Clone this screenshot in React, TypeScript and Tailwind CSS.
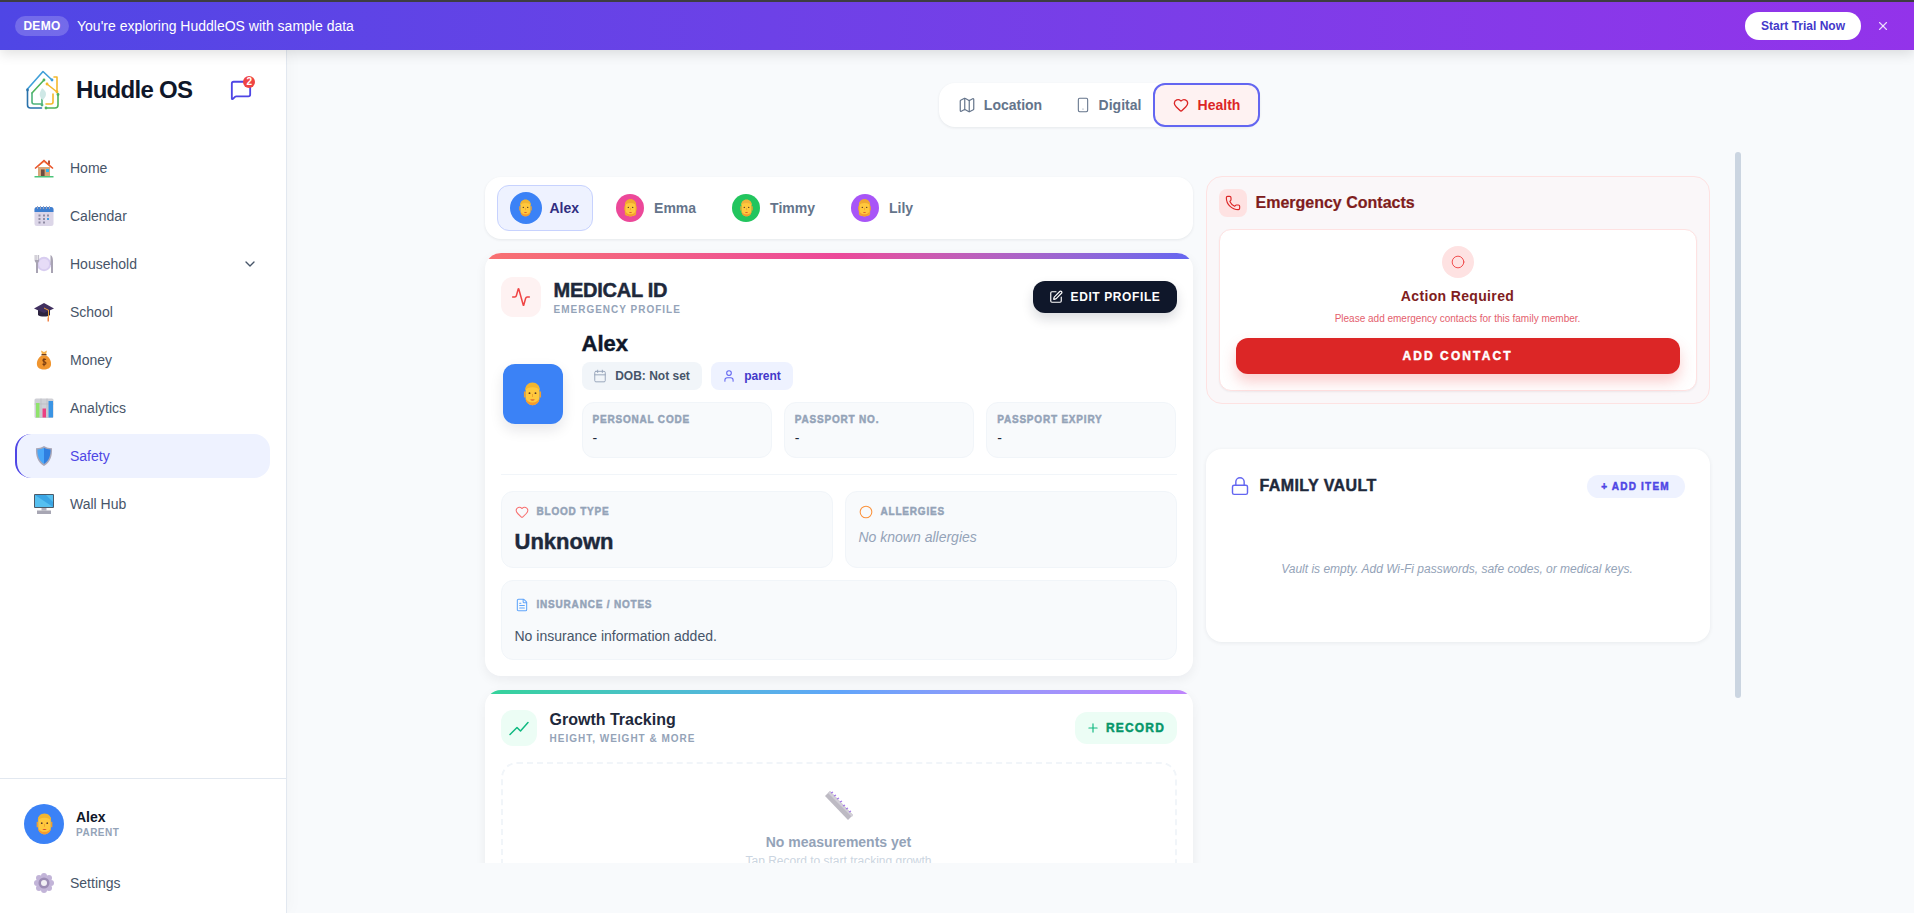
import {
  Activity,
  Calendar,
  ChevronDown,
  Circle,
  FileText,
  Heart,
  Lock,
  Map as MapIcon,
  MessageSquare,
  Phone,
  Plus,
  Smartphone,
  SquarePen,
  User,
  X,
} from "lucide-react";
import type { ReactNode } from "react";

// the original falls on a heavier black face, a thin stroke gets close
const heavy = "font-bold [-webkit-text-stroke:0.45px_currentColor]";

function HomeEmoji() {
  return (
    <svg viewBox="0 0 20 20" className="h-5 w-5">
      <path d="M4 9h12v9H4z" fill="#d9a679" />
      <path d="M7 11.5h3.6V18H7z" fill="#6d4c41" />
      <path d="M12 11h3v3h-3z" fill="#29b6f6" />
      <path d="M14 2.5h2v4h-2z" fill="#b5533c" />
      <path d="M10 1.5 19.5 10l-1 1L10 4 1.5 11l-1-1z" fill="#e8532b" />
      <path d="M10 3.5 3 9.5V9l7-6 7 6v.5z" fill="#f4793a" />
      <path d="M.5 18h19v1.5H.5z" fill="#4cc47a" />
    </svg>
  );
}

function CalendarEmoji() {
  return (
    <svg viewBox="0 0 20 20" className="h-5 w-5">
      <rect x="0.5" y="1" width="19" height="19" rx="2.5" fill="#dcd6e8" />
      <path d="M.5 3.5A2.5 2.5 0 0 1 3 1h14a2.5 2.5 0 0 1 2.5 2.5V6H.5z" fill="#3f7fd0" />
      <path d="M3 0h1v3H3zM6 0h1v3H6zM9 0h1v3H9zM12 0h1v3h-1zM15 0h1v3h-1z" fill="#9aa5c4" />
      <path d="M4.5 8.5h2v2h-2zM9 8.5h2v2H9zM13 8.5h2v2h-2zM4.5 12h2v2h-2zM9 12h2v2H9zM4.5 15.5h2v2h-2zM9 15.5h2v2H9z" fill="#8f8ba3" />
      <path d="M13 12h2v2h-2z" fill="#3ea0e6" />
    </svg>
  );
}

function PlateEmoji() {
  return (
    <svg viewBox="0 0 20 20" className="h-5 w-5">
      <circle cx="10" cy="10" r="7.2" fill="#d8cdf0" />
      <circle cx="10" cy="10" r="5.2" fill="#e6dcf7" />
      <path d="M.7 1h.8v5h1V1h.8v5h1V1h.8v6L4 9v10H2V9L.7 7z" fill="#a8a3b3" />
      <path d="M16.5 1c1.5.5 2.5 2.5 2.5 6v12h-2v-8h-.5z" fill="#a8a3b3" />
    </svg>
  );
}

function CapEmoji() {
  return (
    <svg viewBox="0 0 20 20" className="h-5 w-5">
      <path d="M4 8h12v5c-2 2-10 2-12 0z" fill="#2d2440" />
      <path d="M10 1 20 6.5 10 11 0 6.5z" fill="#41305f" />
      <path d="M10 5.5 15 8v9h-1V8.5L10 6.5z" fill="#f3a638" />
      <path d="M13.5 15.5H15v4h-1.5z" fill="#f2854a" />
    </svg>
  );
}

function MoneyEmoji() {
  return (
    <svg viewBox="0 0 20 20" className="h-5 w-5">
      <path d="M7 .5 10 2l3-1.5-1 4H8z" fill="#f5b14c" />
      <path d="M7.5 4h5v1.5h-5z" fill="#6b3d1e" />
      <path d="M8 5.5h4c4 2 5.500 6 5 9.500-.4 3-3.500 4.500-7 4.500s-6.600-1.500-7-4.500C2.500 11.500 4 7.500 8 5.500" fill="#f0952f" />
      <path d="M12 9.500c-2-1-3.500 0-3 1.200s3 .8 3 2.400-2 1.800-3.500 1M10 8.200v8" fill="none" stroke="#7a3d12" strokeWidth="1.1" />
    </svg>
  );
}

function ChartEmoji() {
  return (
    <svg viewBox="0 0 20 20" className="h-5 w-5">
      <rect x="0.5" y="0.5" width="19" height="19.5" rx="1.5" fill="#cfd0d6" />
      <path d="M.5 6h19M7 .5V20M13 .5V20" stroke="#b9bac2" strokeWidth=".7" />
      <path d="M2 5h3.5v14.500H2z" fill="#8fe36b" />
      <path d="M8.5 10.500H12v9H8.500z" fill="#ec3f82" />
      <path d="M14.5 3H19v16.500h-4.500z" fill="#3a94e4" />
    </svg>
  );
}

function ShieldEmoji() {
  return (
    <svg viewBox="0 0 20 20" className="h-5 w-5">
      <path d="M10 0c2.500 1.600 5 2.200 8 2.300.4 7.500-1.500 14-8 17.700C3.500 16.300 1.600 9.800 2 2.300 5 2.200 7.500 1.600 10 0" fill="#a9a7b8" />
      <path d="M10 1.700V18C5 15 3.300 9.500 3.400 3.500 6 3.300 8 2.800 10 1.700" fill="#4aa8f8" />
      <path d="M10 1.700c2 1.100 4 1.600 6.600 1.800.1 6-1.600 11.500-6.600 14.500z" fill="#2f7fe0" />
    </svg>
  );
}

function MonitorEmoji() {
  return (
    <svg viewBox="0 0 20 20" className="h-5 w-5">
      <rect x="0" y="0" width="20" height="14" rx="1" fill="#4c5a68" />
      <path d="M1 1h18v12H1z" fill="#56c0f0" />
      <path d="M1 1h11l7 7v5z" fill="#3aa5e4" />
      <path d="M7.5 14h5v2.500h-5z" fill="#b2b1bd" />
      <path d="M3 16.500h14V20H3z" fill="#a7a6b3" />
    </svg>
  );
}

function GearEmoji() {
  return (
    <svg viewBox="0 0 20 20" className="h-5 w-5">
      <g fill="#c2b4d8">
        <circle cx="10" cy="3" r="3" />
        <circle cx="10" cy="17" r="3" />
        <circle cx="3" cy="10" r="3" />
        <circle cx="17" cy="10" r="3" />
        <circle cx="5" cy="5" r="3" />
        <circle cx="15" cy="5" r="3" />
        <circle cx="5" cy="15" r="3" />
        <circle cx="15" cy="15" r="3" />
      </g>
      <circle cx="10" cy="10" r="5.5" fill="#9c8cb5" />
      <circle cx="10" cy="10" r="3" fill="#f2f0f5" />
    </svg>
  );
}

function RulerEmoji() {
  return (
    <svg viewBox="0 0 32 32" className="h-8 w-8">
      <path d="M2 7 7 2 30 26 25 31z" fill="#bdbac3" />
      <path d="M7 2 30 26l-1 2L5 4z" fill="#d2cfd7" />
      <path d="m8 4 2-1M11 7l2-1M14 10l2-1M17 13l2-1M20 17l2-1M23 20l2-1M26 23l2-1" stroke="#a274e8" strokeWidth="1.3" />
    </svg>
  );
}

function TrendLine() {
  return (
    <svg viewBox="0 0 20 20" className="h-5 w-5" fill="none" stroke="#10b981" strokeWidth="1.5" strokeLinecap="round" strokeLinejoin="round">
      <path d="M1 16.500 8 9.500l3.500 3.500L19 4.500" />
    </svg>
  );
}

function Face({ className, hair = "#f2b530", skin = "#ffc83d", long = false }: { className: string; hair?: string; skin?: string; long?: boolean }) {
  return (
    <svg viewBox="0 0 24 28" className={className}>
      {long && <path d="M3 9c0-6 4-9 9-9s9 3 9 9v14c0 3-4 4-9 4s-9-1-9-4z" fill={hair} />}
      <path d="M2 11h2v7H2zM20 11h2v7h-2z" fill="#f0a02f" />
      <path d="M4 8c0-4 3-6 8-6s8 2 8 6v11c0 5-4 8-8 8s-8-3-8-8z" fill={skin} />
      <path d="M4 19c0 5 4 8 8 8s8-3 8-8c-1 3-4 5-8 5s-7-2-8-5" fill="#f59a2e" />
      <path d="M3.5 10c0-6 3.500-9.500 8.500-9.500S20.500 4 20.500 10c-2-3-4-4-8.500-4s-6.500 1-8.500 4" fill={hair} />
      <circle cx="8.5" cy="13" r="1.1" fill="#5b3a2a" />
      <circle cx="15.5" cy="13" r="1.1" fill="#5b3a2a" />
      <path d="M9.5 20.500h5c-.5 1.500-4.500 1.500-5 0" fill="#d1402f" />
      <path d="M12 14v3.500" stroke="#eb9b2e" strokeWidth="1" />
    </svg>
  );
}

function LogoMark() {
  return (
    <svg viewBox="0 0 34 40" className="h-10 w-[34px]" fill="none" strokeLinecap="round" strokeLinejoin="round">
      <path d="M1.5 19 17 1.500 26 10" stroke="#3f9fd8" strokeWidth="1.6" />
      <path d="M1.5 21v14c0 2 1 3 3 3h11" stroke="#2a72ab" strokeWidth="1.6" />
      <path d="M6 23 18 10" stroke="#4fb35a" strokeWidth="1.6" />
      <path d="M6 23v9c0 1.500 1 2 2 2h8v-5" stroke="#4fb37a" strokeWidth="1.6" />
      <path d="M21 14l10 8M31 22V7h-3" stroke="#f4b82c" strokeWidth="1.6" />
      <path d="M27 24v8c0 1.500-1 2-2 2h-5" stroke="#f4b82c" strokeWidth="1.6" />
      <path d="M32 25v10c0 2-1 3-3 3h-9" stroke="#4fb35a" strokeWidth="1.6" />
      <path d="M16 18c-1 3-3 5-2 8s2 3 3 4c1-2 3-3 3-6s-2-4-4-6" fill="#cfe8e6" />
      <circle cx="1.5" cy="20" r="1.4" fill="#2a72ab" />
      <circle cx="18" cy="10" r="1.4" fill="#4fb35a" />
      <circle cx="26" cy="10" r="1.4" fill="#3f9fd8" />
      <circle cx="21" cy="14" r="1.4" fill="#f4b82c" />
      <circle cx="31" cy="22" r="1.4" fill="#f4b82c" />
      <circle cx="32" cy="24.5" r="1.4" fill="#4fb35a" />
      <circle cx="20" cy="38" r="1.4" fill="#4fb35a" />
      <circle cx="16" cy="35" r="1.4" fill="#4fb37a" />
    </svg>
  );
}

const navItems: { label: string; icon: ReactNode; active?: boolean; chevron?: boolean }[] = [
  { label: "Home", icon: <HomeEmoji /> },
  { label: "Calendar", icon: <CalendarEmoji /> },
  { label: "Household", icon: <PlateEmoji />, chevron: true },
  { label: "School", icon: <CapEmoji /> },
  { label: "Money", icon: <MoneyEmoji /> },
  { label: "Analytics", icon: <ChartEmoji /> },
  { label: "Safety", icon: <ShieldEmoji />, active: true },
  { label: "Wall Hub", icon: <MonitorEmoji /> },
];

function NavRow({ label, icon, active, chevron }: { label: string; icon: ReactNode; active?: boolean; chevron?: boolean }) {
  return (
    <div
      className={`flex h-11 items-center gap-4 rounded-2xl pr-3 text-sm ${
        active ? "border-l-2 border-[#4f46e5] bg-[#eef2ff] pl-[17px] text-[#4f46e5]" : "pl-[19px] text-[#475569]"
      }`}
    >
      {icon}
      <span className="flex-1">{label}</span>
      {chevron && <ChevronDown size={16} className="text-[#475569]" />}
    </div>
  );
}

function Sidebar() {
  return (
    <aside className="relative flex w-[287px] shrink-0 flex-col border-r border-[#e2e8f0] bg-white shadow-[4px_0_14px_rgba(15,23,42,0.025)]">
      <div className="flex h-[96px] items-start pt-[20px] pl-[26px]">
        <LogoMark />
        <span className="mt-1 ml-4 text-2xl leading-8 font-bold tracking-[-0.7px] text-[#0f172a]">Huddle OS</span>
        <div className="relative mt-[9px] ml-[38px] text-[#4f46e5]">
          <MessageSquare size={22} strokeWidth={2} />
          <span className="absolute -top-[3px] -right-[3px] flex h-3 w-3 items-center justify-center rounded-full bg-[#ef4444] text-[10px] leading-none font-bold text-white">
            2
          </span>
        </div>
      </div>
      <nav className="flex flex-1 flex-col gap-1 pr-4 pl-[15px]">
        {navItems.map((item) => (
          <NavRow key={item.label} {...item} />
        ))}
      </nav>
      <div className="border-t border-[#e2e8f0] pt-[25px] pr-4 pb-2 pl-[15px]">
        <div className="flex items-center gap-3 pl-[9px]">
          <div className="flex h-10 w-10 items-center justify-center rounded-full bg-[#3b82f6]">
            <Face className="h-[22px] w-[19px]" />
          </div>
          <div>
            <div className="text-sm leading-[18px] font-bold text-[#0f172a]">Alex</div>
            <div className="text-[10px] leading-[14px] font-bold tracking-[0.5px] text-[#94a3b8]">PARENT</div>
          </div>
        </div>
        <div className="mt-[17px]">
          <NavRow label="Settings" icon={<GearEmoji />} />
        </div>
      </div>
    </aside>
  );
}

function DemoBanner() {
  return (
    <div className="relative z-10 border-t-2 border-[#3d3d42] shadow-[0_4px_12px_rgba(0,0,0,0.12)]">
      <div className="flex h-12 items-center bg-gradient-to-r from-[#4f46e5] to-[#9333ea] pr-[24px] pl-[15px] text-white">
        <span className="flex h-5 w-[54px] items-center justify-center rounded-full bg-white/20 text-xs font-bold tracking-[0.3px]">DEMO</span>
        <span className="ml-2 flex-1 text-sm">You're exploring HuddleOS with sample data</span>
        <button className="h-7 w-[116px] rounded-full bg-white text-xs font-bold text-[#4338ca]">Start Trial Now</button>
        <X size={14} className="ml-[15px] text-white/80" />
      </div>
    </div>
  );
}

function ModeTabs() {
  return (
    <div className="mx-auto flex h-11 -translate-x-px items-center rounded-2xl bg-white pl-[2px] text-sm font-bold text-[#64748b] shadow-[0_1px_3px_rgba(15,23,42,0.08)]">
      <div className="flex w-[118px] items-center justify-center gap-2">
        <MapIcon size={18} strokeWidth={1.6} />
        Location
      </div>
      <div className="flex w-[94px] items-center justify-center gap-2 pl-1">
        <Smartphone size={16} strokeWidth={1.6} />
        Digital
      </div>
      <div className="flex h-11 w-[107px] items-center justify-center gap-[9px] rounded-xl border-2 border-[#6366f1] bg-[#fef2f2] text-[#dc2626]">
        <Heart size={16} strokeWidth={2} />
        Health
      </div>
    </div>
  );
}

function MemberPill({ name, color, hair, long, active }: { name: string; color: string; hair?: string; long?: boolean; active?: boolean }) {
  return (
    <div
      className={`flex items-center gap-2 rounded-xl border py-[6px] pl-3 text-sm font-bold ${
        active ? "border-[#c7d2fe] bg-[#eef2ff] pr-[13px] text-[#312e81]" : "border-transparent pr-3 text-[#64748b]"
      }`}
    >
      <span className={`flex items-center justify-center rounded-full ${color} ${active ? "h-8 w-8" : "h-7 w-7"}`}>
        <Face className="h-[18px] w-[15px]" hair={hair} long={long} />
      </span>
      <span className={active ? "" : "ml-[2px]"}>{name}</span>
    </div>
  );
}

function FieldLabel({ children }: { children: ReactNode }) {
  return <div className={`text-[10px] leading-[14px] tracking-[0.8px] text-[#94a3b8] ${heavy}`}>{children}</div>;
}

function InfoCell({ label }: { label: string }) {
  return (
    <div className="h-14 rounded-xl border border-[#f1f5f9] bg-[#f8fafc] px-[10px] pt-[10px]">
      <FieldLabel>{label}</FieldLabel>
      <div className="mt-[1px] text-sm leading-5 text-[#1e293b]">-</div>
    </div>
  );
}

function MedicalCard() {
  return (
    <section className="overflow-hidden rounded-2xl bg-white shadow-[0_4px_12px_rgba(15,23,42,0.06)]">
      <div className="h-[6px] bg-gradient-to-r from-[#f87171] via-[#ec4899] to-[#6366f1]" />
      <div className="px-4 pt-[18px] pb-4">
        <div className="flex items-center">
          <div className="flex h-10 w-10 items-center justify-center rounded-xl bg-[#fef2f2]">
            <Activity size={20} strokeWidth={1.8} className="text-[#ef4444]" />
          </div>
          <div className="ml-[13px] flex-1">
            <div className={`pt-[1px] text-[20px] leading-6 tracking-[-0.25px] text-[#1e293b] ${heavy}`}>MEDICAL ID</div>
            <div className="mt-[1px] text-[10px] leading-[14px] font-bold tracking-[1px] text-[#94a3b8]">EMERGENCY PROFILE</div>
          </div>
          <button className="flex h-8 w-[144px] items-center justify-center gap-2 rounded-xl bg-[#0f172a] text-xs font-bold tracking-[0.6px] text-white shadow-[0_6px_12px_rgba(15,23,42,0.15)]">
            <SquarePen size={14} />
            EDIT PROFILE
          </button>
        </div>

        <div className="mt-[13px] flex items-center gap-[19px] pl-[2px]">
          <div className="flex h-[60px] w-[60px] shrink-0 items-center justify-center rounded-xl bg-[#3b82f6] shadow-[0_6px_14px_rgba(15,23,42,0.1)]">
            <Face className="h-[24px] w-[21px]" />
          </div>
          <div className="min-w-0 flex-1">
            <div className={`text-[22px] leading-7 text-[#0f172a] ${heavy}`}>Alex</div>
            <div className="mt-1 flex gap-[9px] text-xs font-bold">
              <span className="flex h-7 w-[120px] items-center justify-center gap-[8px] rounded-lg bg-[#f1f5f9] text-[#475569]">
                <Calendar size={14} strokeWidth={1.6} className="text-[#94a3b8]" />
                DOB: Not set
              </span>
              <span className="flex h-7 w-[82px] items-center justify-center gap-[8px] rounded-lg bg-[#eef2ff] text-[#4338ca]">
                <User size={14} strokeWidth={1.8} className="text-[#6366f1]" />
                parent
              </span>
            </div>
            <div className="mt-3 grid grid-cols-3 gap-3">
              <InfoCell label="PERSONAL CODE" />
              <InfoCell label="PASSPORT NO." />
              <InfoCell label="PASSPORT EXPIRY" />
            </div>
          </div>
        </div>

        <div className="mt-4 border-t border-[#f1f5f9]" />

        <div className="mt-4 grid grid-cols-2 gap-3">
          <div className="h-[77px] rounded-xl border border-[#f1f5f9] bg-[#f8fafc] pt-[13px] pr-3 pl-[13px]">
            <div className="flex items-center gap-2">
              <Heart size={14} strokeWidth={1.8} className="text-[#f87171]" />
              <FieldLabel>BLOOD TYPE</FieldLabel>
            </div>
            <div className={`mt-[9px] text-[22px] leading-7 text-[#1e293b] ${heavy}`}>Unknown</div>
          </div>
          <div className="h-[77px] rounded-xl border border-[#f1f5f9] bg-[#f8fafc] pt-[13px] pr-3 pl-[13px]">
            <div className="flex items-center gap-2">
              <Circle size={14} strokeWidth={1.8} className="text-[#fb923c]" />
              <FieldLabel>ALLERGIES</FieldLabel>
            </div>
            <div className="mt-[8px] text-sm leading-5 text-[#94a3b8] italic">No known allergies</div>
          </div>
        </div>

        <div className="mt-3 h-20 rounded-xl border border-[#f1f5f9] bg-[#f8fafc] pt-[17px] pr-3 pl-[13px]">
          <div className="flex items-center gap-2">
            <FileText size={14} strokeWidth={1.8} className="text-[#60a5fa]" />
            <FieldLabel>INSURANCE / NOTES</FieldLabel>
          </div>
          <div className="mt-[14px] text-sm leading-5 text-[#475569]">No insurance information added.</div>
        </div>
      </div>
    </section>
  );
}

function GrowthCard() {
  return (
    <section className="overflow-hidden rounded-2xl bg-white shadow-[0_4px_12px_rgba(15,23,42,0.06)]">
      <div className="h-1 bg-gradient-to-r from-[#34d399] via-[#60a5fa] to-[#c084fc]" />
      <div className="px-4 pt-4 pb-6">
        <div className="flex items-center">
          <div className="flex h-9 w-9 items-center justify-center rounded-xl bg-[#ecfdf5]">
            <TrendLine />
          </div>
          <div className="ml-[13px] flex-1">
            <div className="text-base leading-5 font-bold text-[#1e293b]">Growth Tracking</div>
            <div className="mt-[2px] text-[10px] leading-[14px] font-bold tracking-[1px] text-[#94a3b8]">HEIGHT, WEIGHT &amp; MORE</div>
          </div>
          <button className={`flex h-8 w-[102px] items-center justify-center gap-[6px] rounded-xl bg-[#ecfdf5] text-xs tracking-[1.2px] text-[#059669] ${heavy}`}>
            <Plus size={14} strokeWidth={2} className="text-[#10b981]" />
            RECORD
          </button>
        </div>
        <div className="mt-[16px] flex h-[180px] flex-col items-center rounded-2xl border-2 border-dashed border-[#f1f5f9] pt-[25px]">
          <RulerEmoji />
          <div className="mt-[11px] text-sm leading-5 font-bold text-[#94a3b8]">No measurements yet</div>
          <div className="mt-[1px] text-xs leading-4 text-[#cbd5e1]">Tap Record to start tracking growth</div>
        </div>
      </div>
    </section>
  );
}

function EmergencyCard() {
  return (
    <section className="rounded-2xl border border-[#fee2e2] bg-[#faf7f9] p-3">
      <div className="flex items-center gap-[9px]">
        <div className="flex h-7 w-7 items-center justify-center rounded-lg bg-[#fee2e2]">
          <Phone size={16} strokeWidth={1.7} className="text-[#dc2626]" />
        </div>
        <h3 className="text-base font-bold text-[#7f1d1d] [-webkit-text-stroke:0.2px_currentColor]">Emergency Contacts</h3>
      </div>
      <div className="mt-3 flex flex-col items-center rounded-xl border border-[#fee2e2] bg-white p-4 shadow-[0_1px_2px_rgba(15,23,42,0.05)]">
        <div className="flex h-8 w-8 items-center justify-center rounded-full bg-[#fee2e2]">
          <Circle size={14} strokeWidth={1.6} className="text-[#ef4444]" />
        </div>
        <div className="mt-2 text-sm leading-5 font-bold tracking-[0.35px] text-[#7f1d1d]">Action Required</div>
        <div className="mt-[6px] text-[10px] leading-[14px] text-[#e4606d]">Please add emergency contacts for this family member.</div>
        <button className={`mt-3 h-9 w-full rounded-xl bg-[#dc2626] text-xs tracking-[2.1px] text-white shadow-[0_8px_14px_rgba(239,68,68,0.25)] ${heavy}`}>
          ADD CONTACT
        </button>
      </div>
    </section>
  );
}

function VaultCard() {
  return (
    <section className="mt-[45px] h-[193px] rounded-2xl bg-white pt-[25px] pr-[25px] pl-6 shadow-[0_1px_4px_rgba(15,23,42,0.07)]">
      <div className="flex items-center justify-between">
        <div className="flex items-center gap-[10px]">
          <Lock size={20} strokeWidth={1.7} className="text-[#6366f1]" />
          <h3 className={`text-base leading-6 tracking-[0.4px] text-[#1e293b] ${heavy}`}>FAMILY VAULT</h3>
        </div>
        <button className={`h-[23px] w-[98px] rounded-full bg-[#eef2ff] text-[10px] tracking-[1.2px] text-[#4f46e5] ${heavy}`}>+ ADD ITEM</button>
      </div>
      <p className="mt-[63px] text-center text-xs leading-4 text-[#94a3b8] italic">Vault is empty. Add Wi-Fi passwords, safe codes, or medical keys.</p>
    </section>
  );
}

export default function App() {
  return (
    <div className="flex h-screen flex-col overflow-hidden bg-[#f8fafc] font-['Liberation_Sans',Arial,sans-serif]">
      <DemoBanner />
      <div className="flex min-h-0 flex-1">
        <Sidebar />
        <main className="flex min-w-0 flex-1 flex-col pt-[33px] pb-[50px]">
          <ModeTabs />
          <div className="relative mx-auto mt-[25px] min-h-0 w-[1280px] flex-1 overflow-hidden pt-6 pl-6">
            <div className="grid grid-cols-[708px_504px] gap-[13px]">
              <div className="mt-[1px] flex flex-col gap-[14px]">
                <div className="flex gap-[10px] rounded-2xl bg-white px-3 py-2 shadow-[0_1px_3px_rgba(15,23,42,0.08)]">
                  <MemberPill name="Alex" color="bg-[#3b82f6]" active />
                  <MemberPill name="Emma" color="bg-[#ec4899]" hair="#f0a830" long />
                  <MemberPill name="Timmy" color="bg-[#22c55e]" hair="#f2b33a" />
                  <MemberPill name="Lily" color="bg-[#a855f7]" hair="#f0a830" long />
                </div>
                <MedicalCard />
                <GrowthCard />
              </div>
              <div>
                <EmergencyCard />
                <VaultCard />
              </div>
            </div>
            {/* scroll thumb, sits over the panel edge */}
            <div className="absolute top-0 right-0 h-[546px] w-[6px] rounded-full bg-[#cbd5e1]" />
          </div>
        </main>
      </div>
    </div>
  );
}
